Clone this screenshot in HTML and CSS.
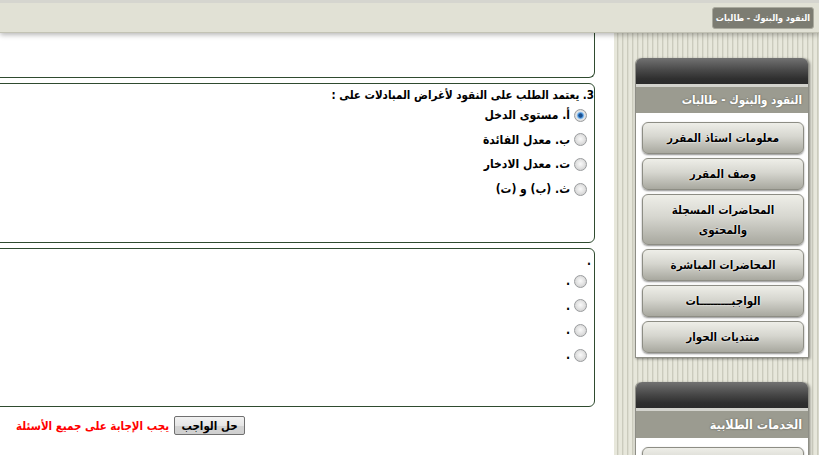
FILE: index.html
```html
<!DOCTYPE html>
<html lang="ar" dir="rtl">
<head>
<meta charset="utf-8">
<title>النقود والبنوك - طالبات</title>
<link rel="stylesheet" href="styles.css">
</head>
<body>
<header class="topbar">
  <span class="crumb">النقود والبنوك - طالبات</span>
</header>
<div class="layout">
  <aside class="sidebar">
    <section class="panel">
      <div class="panel-head"></div>
      <div class="panel-title">النقود والبنوك - طالبات</div>
      <div class="panel-body">
        <a class="side-btn">معلومات استاذ المقرر</a>
        <a class="side-btn">وصف المقرر</a>
        <a class="side-btn tall">المحاضرات المسجلة<br>والمحتوى</a>
        <a class="side-btn">المحاضرات المباشرة</a>
        <a class="side-btn">الواجبـــــــــات</a>
        <a class="side-btn">منتديات الحوار</a>
      </div>
    </section>
    <section class="panel panel-second">
      <div class="panel-head"></div>
      <div class="panel-title big">الخدمات الطلابية</div>
      <div class="panel-body">
        <a class="side-btn">الخدمات الطلابية</a>
      </div>
    </section>
  </aside>
  <main class="content">
    <div class="qbox qbox-first"></div>
    <div class="qbox qbox-main">
      <div class="question">3. يعتمد الطلب على النقود لأغراض المبادلات على :</div>
      <label class="option"><input type="radio" name="q3" checked><span>أ. مستوى الدخل</span></label>
      <label class="option"><input type="radio" name="q3"><span>ب. معدل الفائدة</span></label>
      <label class="option"><input type="radio" name="q3"><span>ت. معدل الادخار</span></label>
      <label class="option"><input type="radio" name="q3"><span>ث. (ب) و (ت)</span></label>
    </div>
    <div class="qbox qbox-last">
      <div class="question dot">.</div>
      <label class="option"><input type="radio" name="q4"><span>.</span></label>
      <label class="option"><input type="radio" name="q4"><span>.</span></label>
      <label class="option"><input type="radio" name="q4"><span>.</span></label>
      <label class="option"><input type="radio" name="q4"><span>.</span></label>
    </div>
    <div class="submit-row">
      <button class="submit-btn" type="button">حل الواجب</button>
      <span class="warn">يجب الإجابة على جميع الأسئلة</span>
    </div>
  </main>
</div>
</body>
</html>
```
FILE: styles.css
```css
html, body {
  margin: 0;
  padding: 0;
  height: 100%;
  overflow: hidden;
}
body {
  direction: rtl;
  background: #ffffff;
  font-family: "DejaVu Sans Condensed", "DejaVu Sans", "Liberation Sans", sans-serif;
  color: #000;
}

/* top band */
.topbar {
  position: relative;
  z-index: 2;
  height: 29px;
  border-top: 3px solid #d5d5cf;
  border-bottom: 1px solid #c3c3b5;
  background: #e1e1d5;
  box-shadow: 0 2px 5px rgba(0, 0, 0, 0.28);
  display: flex;
  align-items: center;
  padding-right: 5px;
}
.crumb {
  background: #7c7c72;
  border: 1px solid #a9a99d;
  border-radius: 3px;
  color: #fff;
  font-size: 9px;
  font-weight: bold;
  height: 20px;
  line-height: 20px;
  padding: 0 3px;
}

.layout {
  display: flex;
  height: calc(100% - 33px);
}

/* sidebar */
.sidebar {
  width: 174px;
  flex: none;
  padding: 25px 9px 0 21px;
  background-color: #e3e3d7;
  background-image: repeating-linear-gradient(90deg, #e7e7db 0 3px, #cbcbbd 3px 4px, #dcdcd0 4px 5px);
  border-right: 1px solid #d8d8cc;
}
.panel {
  box-shadow: 1px 1px 3px rgba(0, 0, 0, 0.45);
  border-radius: 6px 6px 0 0;
  border: 1px solid #8e8e86;
  border-top: none;
}
.panel-second {
  margin-top: 24px;
}
.panel-head {
  height: 26px;
  border-radius: 6px 6px 0 0;
  background: linear-gradient(#727272, #4a4a4a 45%, #2f2f2f 80%, #2b2b2b);
}
.panel-title {
  border-top: 3px solid #d3d3cd;
  background: #9b9b90;
  height: 26px;
  line-height: 26px;
  color: #fff;
  font-size: 11.5px;
  font-weight: bold;
  padding-right: 6px;
  text-shadow: 0 0 2px #55554c;
}
.panel-title.big {
  font-size: 12.5px;
  height: 27px;
  line-height: 27px;
}
.panel-body {
  background: #fff;
  padding: 9px 4px 4px 6px;
  display: flex;
  flex-direction: column;
  gap: 4px;
}
.side-btn {
  display: flex;
  align-items: center;
  justify-content: center;
  text-align: center;
  height: 30px;
  border: 1px solid #8d8d84;
  border-radius: 6px;
  background: linear-gradient(#eeeee8, #d6d6cf 45%, #bdbdb5 75%, #a8a89f);
  box-shadow: 0 1px 2px rgba(0, 0, 0, 0.45);
  font-size: 11.5px;
  font-weight: bold;
  color: #000;
  text-shadow: 0 0 2px #fff, 0 0 1px #fff;
  line-height: 20px;
}
.side-btn.tall {
  height: 49px;
}

/* main content */
.content {
  flex: 1;
  overflow: hidden;
  padding-right: 19px;
}
.qbox {
  margin-left: -334px;
  border: 1px solid #2f4b2f;
  border-radius: 0 6px 6px 0;
  background: #fff;
}
.qbox-first {
  height: 44px;
  border-top: none;
  border-top-right-radius: 0;
}
.qbox-main {
  margin-top: 5px;
  padding-top: 3px;
  box-sizing: border-box;
  height: 160px;
}
.qbox-last {
  margin-top: 5px;
  height: 159px;
  box-sizing: border-box;
  padding-top: 4px;
}
.question {
  font-size: 11.5px;
  font-weight: bold;
  line-height: 16px;
}
.question.dot {
  padding-right: 3px;
}
.option {
  display: flex;
  align-items: center;
  gap: 4px;
  height: 24.6px;
  padding-right: 7px;
  font-size: 12px;
  font-weight: bold;
}
.option input {
  appearance: none;
  -webkit-appearance: none;
  margin: 0;
  width: 13px;
  height: 13px;
  border-radius: 50%;
  border: 1px solid #9a9c9e;
  box-sizing: border-box;
  background: radial-gradient(circle at 50% 45%, #fafafa 0, #e4e4e4 45%, #c6c6c6 100%);
  flex: none;
}
.option input:checked {
  background: radial-gradient(circle, #1d4f8c 0 1.8px, #3f8ad6 2.3px, #aed1ef 3.6px, #e6e6e6 4.2px, #c6c6c6 100%);
}

.submit-row {
  margin-left: -334px;
  margin-top: 9px;
  display: flex;
  justify-content: center;
  align-items: center;
  gap: 5px;
}
.submit-btn {
  font-family: "DejaVu Sans Condensed", "DejaVu Sans", "Liberation Sans", sans-serif;
  font-size: 11.5px;
  font-weight: bold;
  color: #000;
  width: 71px;
  height: 19px;
  padding: 0;
  border: 1px solid #707070;
  border-radius: 2px;
  background: linear-gradient(#f2f2f2, #e6e6e6 50%, #d4d4d4 51%, #cfcfcf);
}
.warn {
  color: #ff0000;
  font-size: 11.5px;
  font-weight: bold;
}
```
